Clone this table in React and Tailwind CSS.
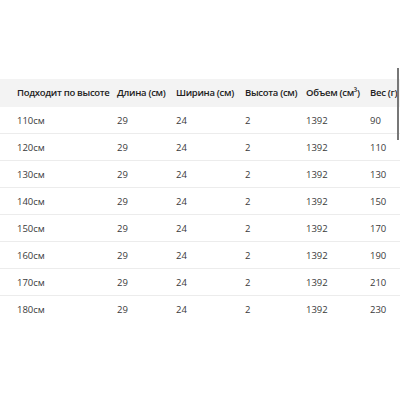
const rows = [
  ['110см', '29', '24', '2', '1392', '90'],
  ['120см', '29', '24', '2', '1392', '110'],
  ['130см', '29', '24', '2', '1392', '130'],
  ['140см', '29', '24', '2', '1392', '150'],
  ['150см', '29', '24', '2', '1392', '170'],
  ['160см', '29', '24', '2', '1392', '190'],
  ['170см', '29', '24', '2', '1392', '210'],
  ['180см', '29', '24', '2', '1392', '230'],
];

const cols = 'grid grid-cols-[100px_59px_69px_61px_64px_1fr] pl-[17px] items-center';

export default function App() {
  return (
    <div className="w-[400px] h-[400px] bg-white relative overflow-hidden text-[9.5px] text-[#3a3a3a]" style={{ fontFamily: '"Open Sans", "Noto Sans", sans-serif' }}>
      <div className="pt-[79px]">
        <div className={`${cols} h-[28px] bg-[#f3f3f3] font-semibold text-[#222] whitespace-nowrap tracking-[-0.3px]`}>
          <div>Подходит по высоте</div>
          <div>Длина (см)</div>
          <div>Ширина (см)</div>
          <div>Высота (см)</div>
          <div>Объем (см³)</div>
          <div>Вес (г)</div>
        </div>
        {rows.map((r, i) => (
          <div key={i} className={`${cols} h-[27px] pt-[2px] ${i < rows.length - 1 ? 'border-b border-[#ececec]' : ''}`}>
            {r.map((c, j) => <div key={j}>{c}</div>)}
          </div>
        ))}
      </div>
      <div className="absolute right-[1px] top-[68px] w-[2px] h-[72px] bg-[#777]" />
    </div>
  );
}
